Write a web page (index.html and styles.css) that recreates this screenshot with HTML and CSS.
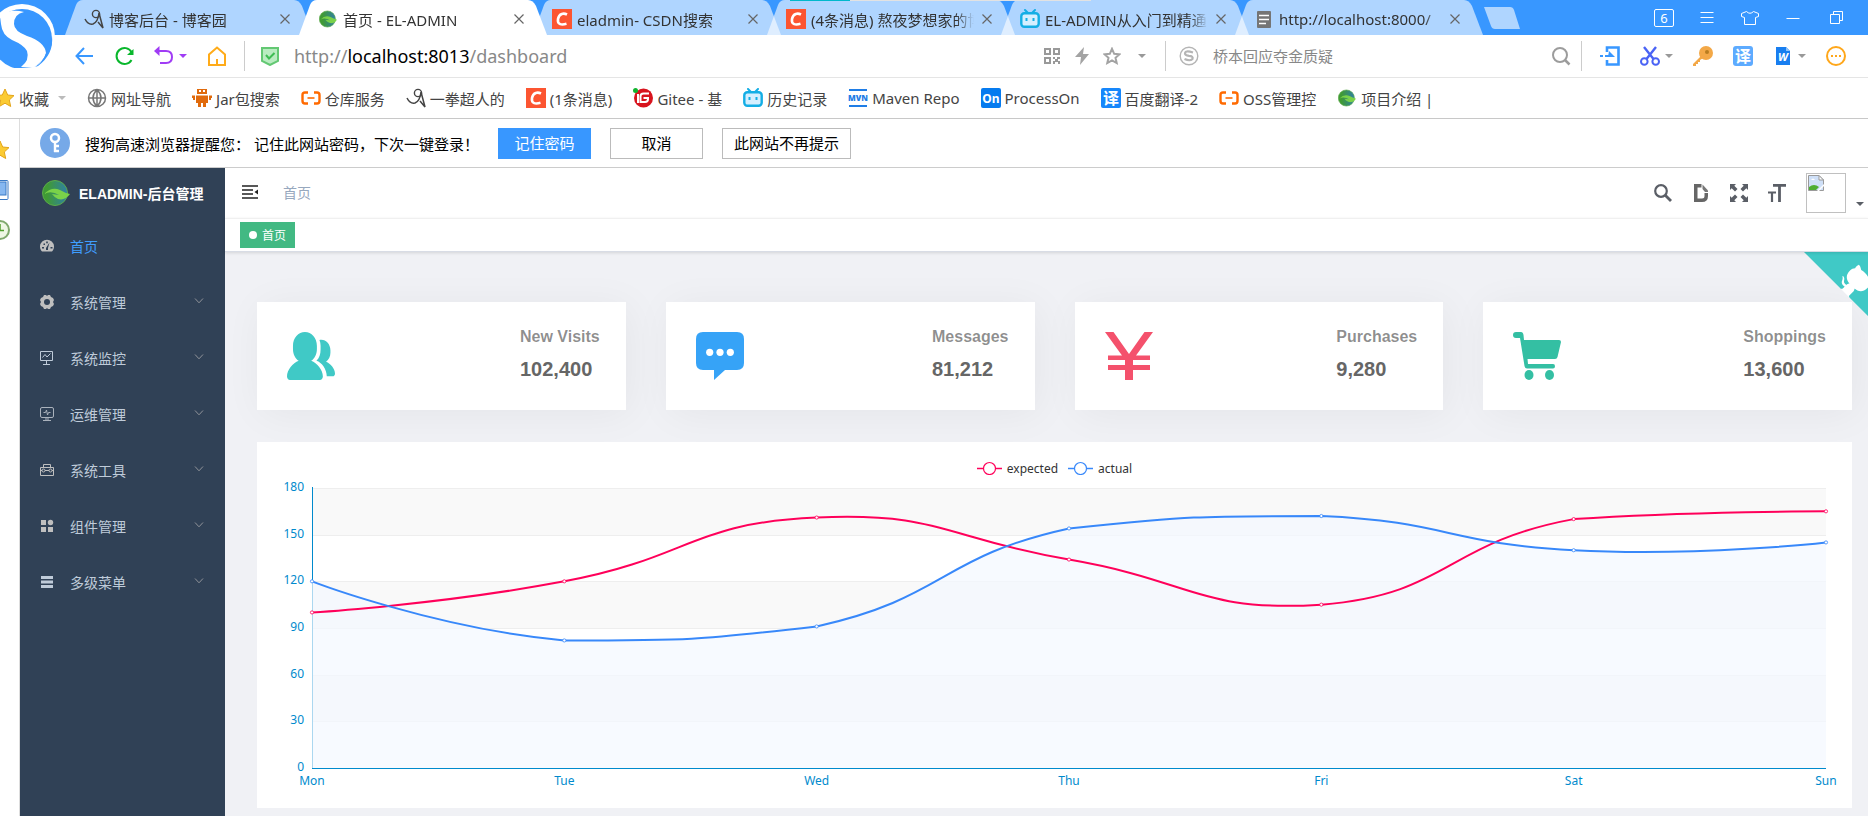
FILE: index.html
```html
<!DOCTYPE html>
<html lang="zh-CN">
<head>
  <meta charset="UTF-8">
  <meta name="viewport" content="width=device-width, initial-scale=1.0">
  <title>首页 - EL-ADMIN</title>
  <link rel="stylesheet" href="styles.css">
</head>
<body>
  <!-- shared icons -->
  <svg class="sprite" aria-hidden="true">
    <defs>
      <linearGradient id="leaf-bg" x1="0" y1="0" x2="1" y2="0">
        <stop offset="0.2" stop-color="#3f9a35"/>
        <stop offset="1" stop-color="#2f7fa6"/>
      </linearGradient>
    </defs>
    <symbol id="i-tab" viewBox="0 0 248 35" preserveAspectRatio="none">
      <path d="M0 35 L11 5 Q13 0 18 0 H229 Q234 0 237 6 L248 35 Z"/>
    </symbol>
    <symbol id="i-close" viewBox="0 0 10 10">
      <path d="M0.500 0.500 L9.500 9.500 M9.500 0.500 L0.500 9.500" fill="none" stroke="#666" stroke-width="1.200"/>
    </symbol>
    <symbol id="i-caret" viewBox="0 0 8 4"><path d="M0 0 H8 L4 4 Z"/></symbol>
    <symbol id="i-chevron" viewBox="0 0 10 6">
      <path d="M1 0.500 L5 4.800 L9 0.500" fill="none" stroke="#909399" stroke-width="1"/>
    </symbol>
    <symbol id="i-cnblogs" viewBox="0 0 20 20">
      <circle cx="12" cy="5" r="3.600" fill="none" stroke="#444" stroke-width="1.400"/>
      <path d="M1 10 Q4 16 9 15 Q14 13 15 4 L19 19 L14 13" fill="none" stroke="#444" stroke-width="1.500"/>
    </symbol>
    <symbol id="i-leaf" viewBox="0 0 28 26">
      <circle cx="13" cy="13" r="12.500" fill="url(#leaf-bg)" stroke="#5cab4a" stroke-width="1"/>
      <path d="M2 14 Q10 6 18 10 Q23 13 28 14 Q23 21 16 19 Q12 17 10 14 L17 15 Q9 10 2 14 Z" fill="#7ad249"/>
    </symbol>
    <symbol id="i-csdn" viewBox="0 0 20 20">
      <rect width="20" height="20" fill="#fc5531"/>
      <path d="M15 5.500 C12 4 7 4 6 10 C5 16 10 16 14.500 14.800" fill="none" stroke="#fff" stroke-width="2.600"/>
    </symbol>
    <symbol id="i-bili" viewBox="0 0 20 20">
      <path d="M5 1 L8 4 M15 1 L12 4" stroke="#14aee5" stroke-width="2" stroke-linecap="round"/>
      <rect x="1.300" y="4.300" width="17.400" height="13.400" rx="3" fill="#d5efff" stroke="#14aee5" stroke-width="2.400"/>
      <path d="M6.500 9 V12 M13.500 9 V12" stroke="#14aee5" stroke-width="2"/>
    </symbol>
    <symbol id="i-aliyun" viewBox="0 0 20 14">
      <path d="M7 1.500 H4 Q1.500 1.500 1.500 4 V10 Q1.500 12.500 4 12.500 H7 M13 1.500 H16 Q18.500 1.500 18.500 4 V10 Q18.500 12.500 16 12.500 H13" fill="none" stroke="#ff6a00" stroke-width="2.400"/>
      <path d="M6.500 7 H13.500" stroke="#ff6a00" stroke-width="1.600"/>
    </symbol>
    <symbol id="i-star" viewBox="0 0 20 20">
      <path d="M10 1 L12.700 7 L19 7.600 L14.300 12 L15.700 18.500 L10 15.200 L4.300 18.500 L5.700 12 L1 7.600 L7.300 7 Z" fill="#fbcb33" stroke="#e3a51b" stroke-width="1"/>
    </symbol>
  </svg>

  <header class="browser">
    <svg class="brand" viewBox="0 0 56 68" aria-hidden="true">
      <circle cx="22" cy="37" r="33" fill="#fff"/>
      <circle cx="22" cy="39" r="30" fill="#3897ff"/>
      <path d="M0 16 Q10 8 24 12 Q14 14 14 24 Q14 31 27 36 Q45 42 46 53 Q44 61 33 68 L21 67 Q30 60 27 51 Q24 45 12 40 Q2 35 1 24 Z" fill="#fff"/>
      <path d="M35 67 Q47 60 47 46 Q52 40 52 36 Q54 54 38 66 Z" fill="#3897ff"/>
    </svg>
    <div class="tab-strip">
      <nav class="tabs">
        <div class="tab">
          <svg class="tab-shape"><use href="#i-tab"/></svg>
          <svg class="icon"><use href="#i-cnblogs"/></svg>
          <a class="tab-title" href="#">博客后台 - 博客园</a>
          <button class="tab-close" aria-label="关闭"><svg><use href="#i-close"/></svg></button>
        </div>
        <div class="tab active">
          <svg class="tab-shape"><use href="#i-tab"/></svg>
          <svg class="icon leaf-small"><use href="#i-leaf"/></svg>
          <a class="tab-title" href="#">首页 - EL-ADMIN</a>
          <button class="tab-close" aria-label="关闭"><svg><use href="#i-close"/></svg></button>
        </div>
        <div class="tab">
          <svg class="tab-shape"><use href="#i-tab"/></svg>
          <svg class="icon"><use href="#i-csdn"/></svg>
          <a class="tab-title" href="#">eladmin- CSDN搜索</a>
          <button class="tab-close" aria-label="关闭"><svg><use href="#i-close"/></svg></button>
        </div>
        <div class="tab loading">
          <svg class="tab-shape"><use href="#i-tab"/></svg>
          <svg class="icon"><use href="#i-csdn"/></svg>
          <a class="tab-title" href="#">(4条消息) 熬夜梦想家的博</a>
          <button class="tab-close" aria-label="关闭"><svg><use href="#i-close"/></svg></button>
        </div>
        <div class="tab">
          <svg class="tab-shape"><use href="#i-tab"/></svg>
          <svg class="icon"><use href="#i-bili"/></svg>
          <a class="tab-title" href="#">EL-ADMIN从入门到精通</a>
          <button class="tab-close" aria-label="关闭"><svg><use href="#i-close"/></svg></button>
        </div>
        <div class="tab">
          <svg class="tab-shape"><use href="#i-tab"/></svg>
          <svg class="icon" viewBox="0 0 20 20"><rect x="3" y="2" width="14" height="17" rx="1" fill="#757575"/><path d="M5 6.500 H15 M5 10.500 H15 M5 14.500 H12" stroke="#fff" stroke-width="1.500"/></svg>
          <a class="tab-title" href="#">http://localhost:8000/</a>
          <button class="tab-close" aria-label="关闭"><svg><use href="#i-close"/></svg></button>
        </div>
      </nav>
      <button class="new-tab" aria-label="新标签">
        <svg viewBox="0 0 36 22"><path d="M0 0 H26 Q29 0 30 3 L36 22 H11 Q8 22 7 19 Z" fill="#afd5ff"/></svg>
      </button>
      <div class="window-controls">
        <button class="tab-count">6</button>
        <button aria-label="菜单"><svg viewBox="0 0 20 20"><path d="M3.500 4.500 H16.500 M3.500 9.500 H16.500 M3.500 14.500 H16.500" stroke="#fff"/></svg></button>
        <button aria-label="皮肤"><svg viewBox="0 0 20 20"><path d="M6.500 3.500 L1.500 5.500 V8.500 L4.500 9.500 V16.500 H15.500 V9.500 L18.500 8.500 V5.500 L13.500 3.500 Q10 7 6.500 3.500 Z" fill="none" stroke="#fff"/></svg></button>
        <button aria-label="最小化"><svg viewBox="0 0 20 20"><path d="M3.500 10.500 H16.500" stroke="#fff"/></svg></button>
        <button aria-label="还原"><svg viewBox="0 0 20 20"><path d="M4.500 6.500 H13.500 V15.500 H4.500 Z M7.500 6 V3.500 H16.500 V12.500 H14" fill="none" stroke="#fff"/></svg></button>
      </div>
    </div>

    <div class="toolbar">
      <div class="nav-buttons">
        <button aria-label="后退"><svg viewBox="0 0 20 20"><path d="M19 10 H3 M10 2 L2.500 10 L10 18" fill="none" stroke="#3897ff" stroke-width="2"/></svg></button>
        <button aria-label="刷新"><svg viewBox="0 0 20 20"><path d="M17.500 6 A8 8 0 1 0 17.500 14" fill="none" stroke="#09b72c" stroke-width="2"/><path d="M19.500 3 V9 H13 Z" fill="#09b72c"/></svg></button>
        <button class="with-caret purple" aria-label="恢复"><svg viewBox="0 0 20 20"><path d="M3 5 H12 Q18 5 18 11 Q18 17 12 17 H6" fill="none" stroke="#a03cf5" stroke-width="2"/><path d="M0 5 L5.500 0 V10 Z" fill="#a03cf5"/></svg><svg class="caret"><use href="#i-caret"/></svg></button>
        <button aria-label="主页"><svg viewBox="0 0 20 20"><path d="M2 19 V8.500 L10 1.500 L18 8.500 V19 Z M10 19 V13" fill="none" stroke="#ffab19" stroke-width="2"/></svg></button>
      </div>
      <div class="address">
        <svg class="icon" viewBox="0 0 20 20"><path d="M2 2 H18 V15 L10 19 L2 15 Z" fill="#b9ecc1" stroke="#63c873" stroke-width="2"/><path d="M6 9 L9 12.500 L14.500 7" fill="none" stroke="#3ebd53" stroke-width="2"/></svg>
        <div class="url" role="textbox" aria-label="地址">http://<b>localhost:8013</b>/dashboard</div>
        <div class="address-tools">
          <button aria-label="二维码"><svg viewBox="0 0 18 18"><path d="M2 2 H7 V7 H2 Z M11 2 H16 V7 H11 Z M2 11 H7 V16 H2 Z" fill="none" stroke="#999" stroke-width="2"/><path d="M10 10 H12 V12 H14 V10 H17 V12 H15 V14 H17 V17 H15 V15 H12 V17 H10 V14 H12 V12 H10 Z" fill="#999"/></svg></button>
          <button aria-label="极速"><svg viewBox="0 0 18 18"><path d="M11 0 L2 10 H8 L7 18 L16 7 H10 Z" fill="#a3a3a3"/></svg></button>
          <button aria-label="收藏"><svg viewBox="0 0 18 18"><path d="M9 1.800 L11.200 6.800 L16.500 7.300 L12.500 10.800 L13.700 16 L9 13.300 L4.300 16 L5.500 10.800 L1.500 7.300 L6.800 6.800 Z" fill="none" stroke="#a3a3a3" stroke-width="2"/></svg></button>
          <button class="gray" aria-label="更多"><svg class="caret"><use href="#i-caret"/></svg></button>
        </div>
      </div>
      <form class="search">
        <svg class="icon" viewBox="0 0 20 20"><circle cx="10" cy="10" r="8.800" fill="none" stroke="#b5b5b5" stroke-width="1.400"/><path d="M14 6.500 Q6 4 6 7.500 Q6 9.500 10 9.800 Q14.500 10 13.500 13 Q11 15.500 5.500 13" fill="none" stroke="#b5b5b5" stroke-width="2.200"/></svg>
        <input type="text" placeholder="桥本回应夺金质疑" aria-label="搜索">
        <button type="button" aria-label="搜索"><svg viewBox="0 0 20 20"><circle cx="9" cy="9" r="7" fill="none" stroke="#9c9c9c" stroke-width="2"/><path d="M14 14 L18.500 18.500" stroke="#9c9c9c" stroke-width="2.500"/></svg></button>
      </form>
      <div class="extensions">
        <button aria-label="发送到手机"><svg viewBox="0 0 20 20"><path d="M7 6 V1.500 H18.500 V18.500 H7 V14" fill="none" stroke="#3897ff" stroke-width="2.600"/><path d="M0 10 H3 M5 10 H9" stroke="#3897ff" stroke-width="2"/><path d="M9 5 L15 11 H8 Z" fill="#3897ff"/></svg></button>
        <button class="with-caret gray" aria-label="截图"><svg viewBox="0 0 20 20"><path d="M4 1 L13.500 13 M16 1 L6.500 13" stroke="#4a63f5" stroke-width="2.400"/><circle cx="4.300" cy="15.500" r="3.300" fill="none" stroke="#4a63f5" stroke-width="2"/><circle cx="15.700" cy="15.500" r="3.300" fill="none" stroke="#4a63f5" stroke-width="2"/></svg><svg class="caret"><use href="#i-caret"/></svg></button>
        <button aria-label="密码"><svg viewBox="0 0 20 20"><circle cx="13" cy="7" r="7" fill="#f3a847"/><path d="M9 9 L0 18 V20 H3 V18 H5 V16 H7 V14 L12 11 Z" fill="#f3a847"/><circle cx="14" cy="6" r="2" fill="#b97c1f"/></svg></button>
        <button aria-label="翻译"><svg viewBox="0 0 20 20"><rect width="20" height="20" rx="3" fill="#5dabff"/><text class="glyph" x="10" y="16" font-size="16">译</text></svg></button>
        <button class="with-caret gray" aria-label="文档"><svg viewBox="0 0 20 20"><path d="M3 1 H13 L17 5 V19 H3 Z" fill="#187ef0"/><path d="M13 1 L17 5 H13 Z" fill="#8ec2fa"/><text class="glyph" x="10" y="15" font-size="11" font-style="italic">W</text></svg><svg class="caret"><use href="#i-caret"/></svg></button>
        <button aria-label="更多扩展"><svg viewBox="0 0 20 20"><circle cx="10" cy="10" r="9" fill="none" stroke="#ffa71a" stroke-width="2"/><path d="M5 9 h2 v2 h-2z M9 9 h2 v2 h-2z M13 9 h2 v2 h-2z" fill="#ffa71a"/></svg></button>
      </div>
    </div>

    <nav class="bookmarks">
      <button class="favorites"><svg class="icon"><use href="#i-star"/></svg>收藏<svg class="caret"><use href="#i-caret"/></svg></button>
      <a href="#"><svg class="icon" viewBox="0 0 20 20"><path d="M10 1.500 A8.500 8.500 0 0 1 10 18.500 A8.500 8.500 0 0 1 10 1.500 Z M10 1.500 Q2 10 10 18.500 M10 1.500 Q18 10 10 18.500 M10 1.500 V18.500 M1.500 10 H18.500" fill="none" stroke="#777" stroke-width="1.500"/></svg>网址导航</a>
      <a href="#"><svg class="icon" viewBox="0 0 20 20"><path d="M5 1 H15 V6 H5 Z M4 7.500 H16 V15 H14 V19 H11 V15 H9 V19 H6 V15 H4 Z M0 7.500 H3 V12 H1 V10 H0 Z M17 7.500 H20 V10 H19 V12 H17 Z" fill="#e06a0c"/><path d="M7 2 h2 v2 h-2z M11 2 h2 v2 h-2z" fill="#fff"/></svg>Jar包搜索</a>
      <a href="#"><svg class="icon"><use href="#i-aliyun"/></svg>仓库服务</a>
      <a href="#"><svg class="icon"><use href="#i-cnblogs"/></svg>一拳超人的</a>
      <a href="#"><svg class="icon"><use href="#i-csdn"/></svg>(1条消息)</a>
      <a href="#"><svg class="icon" viewBox="0 0 20 20"><circle cx="10.500" cy="10" r="9.500" fill="#d8141e"/><circle cx="2.500" cy="2.500" r="2.500" fill="#10b32e"/><path d="M16 5.500 H10.500 Q7.500 5.500 7.500 8 V14 H12 Q15 14 15 11 V10 H10.500 M5 6 V15" fill="none" stroke="#fff" stroke-width="2"/></svg>Gitee - 基</a>
      <a href="#"><svg class="icon"><use href="#i-bili"/></svg>历史记录</a>
      <a href="#"><svg class="icon" viewBox="0 0 20 20"><path d="M1 2 H19 M1 18 H19" stroke="#1f7de6" stroke-width="2"/><text x="10" y="13" font-size="8" font-weight="900" fill="#1f7de6" text-anchor="middle">MVN</text></svg>Maven Repo</a>
      <a href="#"><svg class="icon" viewBox="0 0 20 20"><rect width="20" height="20" rx="2" fill="#067bef"/><text class="glyph" x="10" y="15" font-size="12">On</text></svg>ProcessOn</a>
      <a href="#"><svg class="icon" viewBox="0 0 20 20"><rect width="20" height="20" rx="2" fill="#1787fb"/><text class="glyph" x="10" y="16" font-size="16">译</text></svg>百度翻译-2</a>
      <a href="#"><svg class="icon"><use href="#i-aliyun"/></svg>OSS管理控</a>
      <a href="#"><svg class="icon leaf-small"><use href="#i-leaf"/></svg>项目介绍 |</a>
    </nav>
  </header>

  <div class="page">
    <aside class="dock">
      <svg viewBox="0 0 20 20"><use href="#i-star"/></svg>
      <svg viewBox="0 0 20 20"><rect x="1" y="0.500" width="17" height="19" rx="1" fill="#fff" stroke="#3878c4"/><rect x="2" y="2" width="14" height="13" fill="#86b7f0" stroke="#3878c4"/></svg>
      <svg viewBox="0 0 20 20"><circle cx="10" cy="10" r="9" fill="#eef7e4" stroke="#7fa96c" stroke-width="2"/><path d="M10 4 V10.500 H14" fill="none" stroke="#50a02c" stroke-width="1.500"/></svg>
    </aside>

    <div class="viewport">
      <div class="remember">
        <svg class="key" viewBox="0 0 30 30"><circle cx="15" cy="15" r="15" fill="#76a9e8"/><circle cx="15" cy="10" r="4" fill="none" stroke="#fff" stroke-width="2.500"/><path d="M15 14 V24 M15 18 H19 M14 23 H19" stroke="#fff" stroke-width="2.400"/></svg>
        <p>搜狗高速浏览器提醒您： 记住此网站密码，下次一键登录！</p>
        <button class="primary">记住密码</button>
        <button>取消</button>
        <button class="never">此网站不再提示</button>
      </div>

      <div class="app">
        <aside class="sidebar">
          <a class="logo" href="#"><svg><use href="#i-leaf"/></svg>ELADMIN-后台管理</a>
          <nav class="menu">
            <a class="current" href="#">
              <svg class="icon" viewBox="0 0 14 14"><path d="M1.500 12 A7 7 0 1 1 12.500 12 Q12 12.500 11 12.500 H3 Q2 12.500 1.500 12 Z" fill="#bfbfbf"/><path d="M2 8 h2 v1.500 h-2z M3.500 4.500 h1.500 v1.500 h-1.500z M6.200 2.500 h1.600 v1.700 h-1.600z M10.500 8 h2 v1.500 h-2z M9.500 3.500 L8 9 V11 H6 V9 Z" fill="#304156"/></svg>
              <span>首页</span>
            </a>
            <a href="#">
              <svg class="icon" viewBox="0 0 14 14"><path d="M4 0 H6 L7 1 L8 0 H10 L11 2 L13 3 L14 5 L13 7 L14 9 L13 11 L11 12 L10 14 H8 L7 13 L6 14 H4 L3 12 L1 11 L0 9 L1 7 L0 5 L1 3 L3 2 Z" fill="#bfbfbf"/><circle cx="7" cy="7" r="3" fill="#304156"/></svg>
              <span>系统管理</span><svg class="chevron"><use href="#i-chevron"/></svg>
            </a>
            <a href="#">
              <svg class="icon" viewBox="0 0 14 14"><path d="M0.500 0.500 H12.500 V9.500 H0.500 Z M6.500 9.500 V13 M3 13.500 H10 M2.500 6.500 L5 3.500 L7 6 L10.500 2.500" fill="none" stroke="#bfcbd9"/></svg>
              <span>系统监控</span><svg class="chevron"><use href="#i-chevron"/></svg>
            </a>
            <a href="#">
              <svg class="icon" viewBox="0 0 14 14"><rect x="0.500" y="0.500" width="13" height="10" rx="1.500" fill="none" stroke="#aab2bc"/><path d="M3.500 5.500 H5.500 L6.500 3 L7.500 8 L8.500 5.500 H10.500 M3 13.500 H11 M5 12 H9" fill="none" stroke="#aab2bc"/></svg>
              <span>运维管理</span><svg class="chevron"><use href="#i-chevron"/></svg>
            </a>
            <a href="#">
              <svg class="icon" viewBox="0 0 14 14"><path d="M0.500 4.500 H13.500 V12.500 H0.500 Z M3.500 4 V1.500 H10.500 V4 M1 7.500 H13" fill="none" stroke="#bfbfbf"/><circle cx="3.500" cy="7.500" r="1.500" fill="#304156" stroke="#bfbfbf"/><circle cx="10.500" cy="7.500" r="1.500" fill="#304156" stroke="#bfbfbf"/></svg>
              <span>系统工具</span><svg class="chevron"><use href="#i-chevron"/></svg>
            </a>
            <a href="#">
              <svg class="icon" viewBox="0 0 14 14"><path d="M1 1 H6 V6 H1 Z M1 8 H6 V13 H1 Z M8 8 H13 V13 H8 Z" fill="#bfbfbf"/><circle cx="10.500" cy="3.500" r="2.700" fill="#bfbfbf"/></svg>
              <span>组件管理</span><svg class="chevron"><use href="#i-chevron"/></svg>
            </a>
            <a href="#">
              <svg class="icon" viewBox="0 0 14 14"><path d="M1 1 H13 V4 H1 Z M1 5.500 H13 V8.500 H1 Z M1 10 H13 V13 H1 Z" fill="#bfcbd9"/></svg>
              <span>多级菜单</span><svg class="chevron"><use href="#i-chevron"/></svg>
            </a>
          </nav>
        </aside>

        <main class="main">
          <div class="navbar">
            <button aria-label="收起菜单"><svg class="hamburger" viewBox="0 0 16 14"><path d="M0 1 H16 M0 5 H11 M0 9 H11 M0 13 H16" stroke="#222" stroke-width="1.500"/><path d="M12.500 7 L16 4.500 V9.500 Z" fill="#222"/></svg></button>
            <a class="breadcrumb" href="#">首页</a>
            <div class="navbar-right">
              <button aria-label="搜索"><svg viewBox="0 0 18 18"><circle cx="7" cy="7" r="5.800" fill="none" stroke="#5a5e66" stroke-width="2.200"/><path d="M11 11 L17 17" stroke="#5a5e66" stroke-width="2.800"/></svg></button>
              <button aria-label="文档"><svg viewBox="0 0 18 18"><path d="M2 0 H9.500 V3.500 H5.500 V14.500 H10 Q12.500 14.500 12.500 12 V9 H16 V12 Q16 18 10 18 H2 Z" fill="#666"/><path d="M10.500 0.500 L16 6.500 V8 H13 L10.500 5 Z" fill="#777"/></svg></button>
              <button aria-label="全屏"><svg viewBox="0 0 18 18"><path d="M0 0 H6 L4.300 1.700 L7.500 5 L5 7.500 L1.700 4.300 L0 6 Z M18 0 H12 L13.700 1.700 L10.500 5 L13 7.500 L16.300 4.300 L18 6 Z M0 18 H6 L4.300 16.300 L7.500 13 L5 10.500 L1.700 13.700 L0 12 Z M18 18 H12 L13.700 16.300 L10.500 13 L13 10.500 L16.300 13.700 L18 12 Z" fill="#5a5e66"/></svg></button>
              <button aria-label="布局大小"><svg viewBox="0 0 18 18"><path d="M5 1.300 H18 M11.500 1 V18" stroke="#5a5e66" stroke-width="2.800"/><path d="M0 8.500 H8 M4 8 V18" stroke="#5a5e66" stroke-width="2.200"/></svg></button>
              <button class="avatar" aria-label="用户">
                <span class="avatar-box"><svg viewBox="0 0 16 16"><path d="M0.500 0.500 H11 L15.500 5 V15.500 H0.500 Z" fill="#cfe0f8" stroke="#9a9a9a"/><path d="M3 5 Q5 2 7 5 Z" fill="#fff"/><path d="M1 15 V12 Q6 8 11 12 L8 15 Z" fill="#4fae33"/><path d="M11 0.500 V5 H15.500 Z" fill="#fff" stroke="#9a9a9a"/><path d="M16 9 L9 16 H11 L16 11 Z" fill="#fff"/></svg></span>
                <svg class="caret"><use href="#i-caret"/></svg>
              </button>
            </div>
          </div>
          <div class="tags"><a class="tag" href="#">首页</a></div>

          <div class="dashboard">
            <a class="corner" href="#" aria-label="Github">
              <svg viewBox="0 0 250 250"><path d="M0 0 L115 115 L130 115 L142 142 L250 250 V0 Z" fill="#40c9c6"/><path d="M128.300 109 C113.800 99.700 119 89.600 119 89.600 C122 82.700 120.500 78.600 120.500 78.600 C119.200 72 123.400 76.300 123.400 76.300 C127.300 80.900 125.500 87.300 125.500 87.300 C122.900 97.600 130.600 101.900 134.400 103.200" fill="#fff"/><path d="M115 115 C114.900 115.100 118.700 116.500 119.800 115.400 L133.700 101.600 C136.900 99.200 139.900 98.400 142.200 98.600 C133.800 88 127.500 74.400 143.800 58 C148.500 53.400 154 51.200 159.700 51 C160.300 49.400 163.200 43.600 171.400 40.100 C171.400 40.100 176.100 42.500 178.800 56.200 C183.100 58.600 187.200 61.800 190.900 65.400 C194.500 69 197.700 73.200 200.100 77.600 C213.800 80.200 216.300 84.900 216.300 84.900 C212.700 93.100 206.900 96 205.400 96.600 C205.100 102.400 203 107.800 198.300 112.500 C181.900 128.900 168.300 122.500 157.700 114.100 C157.900 116.900 156.700 120.900 152.700 124.900 L141 136.500 C139.800 137.700 141.600 141.900 141.800 141.800 Z" fill="#fff"/></svg>
            </a>
            <section class="panels">
              <div class="panel">
                <svg viewBox="0 0 128 128" fill="#40c9c6"><path d="M95.648 118.762c0 5.035-3.563 9.121-7.979 9.121H7.980c-4.416 0-7.979-4.086-7.979-9.121C0 100.519 15.408 83.470 31.152 76.750c-9.099-6.430-15.216-17.863-15.216-30.987v-9.128c0-20.160 14.293-36.518 31.893-36.518s31.894 16.358 31.894 36.518v9.122c0 13.137-6.123 24.556-15.216 30.993 15.738 6.726 31.141 23.769 31.141 42.012z"/><path d="M106.032 118.252h15.867c3.376 0 6.101-3.125 6.101-6.972 0-13.957-11.787-26.984-23.819-32.123 6.955-4.919 11.638-13.660 11.638-23.704v-6.985c0-15.416-10.928-27.926-24.390-27.926-1.674 0-3.306.193-4.890.561 1.936 4.713 3.018 9.974 3.018 15.526v9.121c0 13.137-3.056 23.111-11.066 30.993 14.842 4.410 27.312 23.420 27.541 41.509z"/></svg>
                <div class="description"><div class="label">New Visits</div><div class="number">102,400</div></div>
              </div>
              <div class="panel">
                <svg viewBox="0 0 48 48"><path d="M7 0 H41 Q48 0 48 7 V31 Q48 38 41 38 H29 L18 48 V38 H7 Q0 38 0 31 V7 Q0 0 7 0 Z" fill="#36a3f7"/><g fill="#fff"><circle cx="13.700" cy="20.300" r="3.600"/><circle cx="24" cy="20.300" r="3.600"/><circle cx="34.300" cy="20.300" r="3.600"/></g></svg>
                <div class="description"><div class="label">Messages</div><div class="number">81,212</div></div>
              </div>
              <div class="panel">
                <svg viewBox="0 0 48 48"><path d="M0 0 H8.500 L24 22 L39.500 0 H48 L31 23.500 H45 V28 H28 V33 H45 V38 H28 V48 H20 V38 H3 V33 H20 V28 H3 V23.500 H17 Z" fill="#f4516c"/></svg>
                <div class="description"><div class="label">Purchases</div><div class="number">9,280</div></div>
              </div>
              <div class="panel">
                <svg viewBox="0 0 48 48" fill="#34bfa3"><path d="M3 0 H8 Q10 0 10.500 3 L11 8 H46 Q48 8 48 10 L44.500 25 Q44 27 42 27 H14.500 L15 32 H40 Q42 32 42 34.200 Q42 36.500 40 36.500 H14 Q12 36.500 11.500 34 L7 6 H3 Q0 6 0 3 Q0 0 3 0 Z"/><ellipse cx="16" cy="43" rx="4.500" ry="5"/><ellipse cx="36.500" cy="43" rx="4.500" ry="5"/></svg>
                <div class="description"><div class="label">Shoppings</div><div class="number">13,600</div></div>
              </div>
            </section>
            <section class="chart-card">
              <div class="legend">
                <span><svg viewBox="0 0 25 14"><path d="M0 7.500 H25" stroke="#ff005a" stroke-width="1.500"/><circle cx="12.500" cy="7.500" r="6" fill="#fff" stroke="#ff005a" stroke-width="1.200"/></svg>expected</span>
                <span><svg viewBox="0 0 25 14"><path d="M0 7.500 H25" stroke="#3888fa" stroke-width="1.500"/><circle cx="12.500" cy="7.500" r="6" fill="#fff" stroke="#3888fa" stroke-width="1.200"/></svg>actual</span>
              </div>
              <svg class="chart" id="chart"></svg>
            </section>
          </div>
        </main>
      </div>
    </div>
  </div>
  <script src="chart.js"></script>
</body>
</html>
```

FILE: styles.css
```css
* {
  margin: 0;
  padding: 0;
  box-sizing: border-box;
}

body {
  display: flex;
  flex-direction: column;
  height: 100vh;
  overflow: hidden;
  background-color: #fff;
  font-family: "Noto Sans", "Noto Sans CJK SC", sans-serif;
  font-size: 15px;
}

a {
  color: inherit;
  text-decoration: none;
}

button {
  display: flex;
  align-items: center;
  border: none;
  background: none;
  font: inherit;
  color: inherit;
  cursor: pointer;
}

svg {
  display: block;
  flex: none;
}

.sprite {
  position: absolute;
  width: 0;
  height: 0;
}

.icon {
  width: 20px;
  height: 20px;
}

.leaf-small {
  padding: 0 1px;
}

.caret {
  width: 8px;
  height: 4px;
}

.glyph {
  fill: #fff;
  font-weight: 700;
  text-anchor: middle;
}

/* browser chrome */
.browser {
  position: relative;
}

.brand {
  position: absolute;
  left: 0;
  top: 0;
  z-index: 3;
  width: 56px;
  height: 68px;
}

.tab-strip {
  display: flex;
  height: 35px;
  padding-left: 65px;
  background-color: #3897ff;
}

.tabs {
  display: flex;
  flex: 0 1 1418px;
  min-width: 0;
}

.tab {
  position: relative;
  display: flex;
  flex: 1;
  align-items: center;
  gap: 5px;
  min-width: 0;
  padding: 3px 23px 0 19px;
  color: #333;
}

.tab + .tab {
  margin-left: -14px;
}

.tab.active {
  z-index: 1;
}

.tab-shape {
  position: absolute;
  left: 0;
  top: 0;
  width: 100%;
  height: 35px;
  fill: rgba(255, 255, 255, 0.6);
}

.active .tab-shape {
  fill: #fff;
}

.tab .icon,
.tab-title,
.tab-close {
  position: relative;
}

.tab-title {
  flex: 1;
  margin-right: 3px;
  overflow: hidden;
  white-space: nowrap;
  mask-image: linear-gradient(to left, transparent, #000 18px);
}

.tab-close svg {
  width: 10px;
  height: 10px;
}

.loading::after {
  content: "";
  position: absolute;
  left: 23px;
  top: 0;
  width: 301px;
  height: 1px;
  z-index: 2;
  background: linear-gradient(to right, #00b8cc 60px, #e2e2e2 60px);
}

.new-tab {
  margin: 0 auto 0 1px;
}

.new-tab svg {
  width: 36px;
  height: 22px;
}

.window-controls {
  display: flex;
  gap: 23px;
  padding-right: 22px;
  color: #fff;
}

.window-controls svg {
  width: 20px;
  height: 20px;
}

.tab-count {
  justify-content: center;
  align-self: center;
  width: 20px;
  height: 18px;
  border: 1px solid #fff;
  border-radius: 2px;
  font-size: 13px;
}

.toolbar {
  display: flex;
  align-items: center;
  height: 43px;
  padding-left: 74px;
  border-bottom: 1px solid #e5e5e5;
}

.toolbar button svg {
  width: 20px;
  height: 20px;
}

.toolbar button .caret {
  width: 8px;
  height: 4px;
}

.nav-buttons,
.extensions {
  display: flex;
  align-items: center;
  gap: 20px;
}

.with-caret {
  gap: 5px;
}

.purple {
  fill: #a03cf5;
}

.gray {
  fill: #999;
}

.address {
  display: flex;
  flex: 1;
  align-items: center;
  gap: 14px;
  min-width: 0;
  height: 30px;
  margin-left: 17px;
  padding: 0 14px 0 15px;
  border-left: 1px solid #ccc;
}

.url {
  flex: 1;
  min-width: 0;
  overflow: hidden;
  color: #888;
  font-size: 18px;
}

.url b {
  color: #000;
  font-weight: 400;
}

.address-tools {
  display: flex;
  align-items: center;
  gap: 12px;
}

.address-tools button {
  justify-content: center;
  width: 18px;
}

.toolbar .address-tools svg:not(.caret) {
  width: 18px;
  height: 18px;
}

.search {
  display: flex;
  flex: 0 1 417px;
  align-items: center;
  gap: 14px;
  height: 30px;
  padding: 0 10px 0 13px;
  border: solid #ccc;
  border-width: 0 1px;
}

.search input {
  flex: 1;
  min-width: 0;
  border: none;
  outline: none;
  font: inherit;
}

.search input::placeholder {
  color: #888;
}

.extensions {
  padding: 0 22px 0 18px;
}

.bookmarks {
  display: flex;
  align-items: center;
  gap: 21px;
  height: 41px;
  border-bottom: 1px solid #c8c8c8;
  color: #444;
  white-space: nowrap;
}

.bookmarks a,
.favorites {
  display: flex;
  align-items: center;
  gap: 4px;
}

.favorites {
  margin-left: -5px;
  fill: #bbb;
}

.favorites .caret {
  margin-left: 5px;
}

/* page area */
.page {
  display: flex;
  flex: 1;
  min-height: 0;
}

.dock {
  display: flex;
  flex-direction: column;
  align-items: flex-start;
  gap: 20px;
  width: 20px;
  padding-top: 21px;
  overflow: hidden;
  border-right: 1px solid #ddd;
}

.dock svg {
  width: 20px;
  height: 20px;
  margin-left: -10px;
}

.viewport {
  display: flex;
  flex: 1;
  flex-direction: column;
  min-width: 0;
}

.remember {
  display: flex;
  align-items: center;
  height: 49px;
  padding-left: 20px;
  border-bottom: 1px solid #ccc;
  color: #000;
}

.key {
  width: 30px;
  height: 30px;
  margin-right: 15px;
}

.remember p {
  width: 394px;
}

.remember button {
  justify-content: center;
  width: 93px;
  height: 31px;
  margin-left: 19px;
  padding-bottom: 2px;
  border: 1px solid #bbb;
}

.remember .primary {
  border-color: #3897ff;
  background-color: #3897ff;
  color: #fff;
}

.remember .never {
  width: 129px;
}

.app {
  display: flex;
  flex: 1;
  min-height: 0;
  font-size: 14px;
}

.sidebar {
  width: 205px;
  background-color: #304156;
  color: #bfcbd9;
}

.logo {
  display: flex;
  align-items: center;
  gap: 9px;
  height: 50px;
  padding-left: 22px;
  color: #fff;
  font-family: "Liberation Sans", "Noto Sans CJK SC", sans-serif;
  font-weight: 700;
}

.logo svg {
  width: 28px;
  height: 26px;
}

.menu a {
  display: flex;
  align-items: center;
  gap: 16px;
  height: 56px;
  padding: 0 21px 0 20px;
}

.menu .icon {
  width: 14px;
  height: 14px;
}

.menu span {
  flex: 1;
}

.menu .current {
  color: #409eff;
}

.chevron {
  width: 10px;
  height: 6px;
  margin-bottom: 2px;
}

.main {
  display: flex;
  flex: 1;
  flex-direction: column;
  min-width: 0;
}

.navbar {
  display: flex;
  align-items: center;
  gap: 25px;
  height: 50px;
  padding-left: 17px;
  color: #97a8be;
}

.breadcrumb,
.hamburger {
  margin-bottom: 2px;
}

.hamburger {
  width: 16px;
  height: 14px;
}

.navbar-right {
  display: flex;
  align-items: center;
  gap: 20px;
  margin-left: auto;
  padding-right: 4px;
}

.navbar-right button > svg:not(.caret) {
  width: 18px;
  height: 18px;
}

.avatar {
  align-items: flex-end;
  gap: 10px;
  fill: #5a5e66;
}

.avatar-box {
  width: 40px;
  height: 40px;
  padding: 1px;
  border: 1px solid #c0c0c0;
}

.avatar-box svg {
  width: 16px;
  height: 16px;
}

.avatar .caret {
  margin-bottom: 7px;
}

.tags {
  position: relative;
  z-index: 2;
  height: 34px;
  padding: 3px 15px;
  border-top: 1px solid #f0f0f0;
  border-bottom: 1px solid #d8dce5;
  background-color: #fff;
  box-shadow: 0 1px 3px rgba(0, 0, 0, 0.12);
}

.tag {
  display: inline-flex;
  align-items: center;
  gap: 5px;
  height: 26px;
  padding: 0 9px;
  background-color: #42b983;
  color: #fff;
  font-size: 12px;
}

.tag::before {
  content: "";
  width: 8px;
  height: 8px;
  border-radius: 50%;
  background-color: #fff;
}

.dashboard {
  position: relative;
  flex: 1;
  min-height: 0;
  padding: 50px 16px 8px 32px;
  overflow: hidden;
  background-color: #f0f1f5;
}

.corner {
  position: absolute;
  right: -16px;
  top: 0;
  z-index: 1;
}

.corner svg {
  width: 80px;
  height: 80px;
}

.panels {
  display: grid;
  grid-template-columns: repeat(4, 1fr);
  gap: 40px;
  margin-bottom: 32px;
}

.panel {
  display: flex;
  justify-content: space-between;
  height: 108px;
  padding: 26px 26px 26px 30px;
  background-color: #fff;
  box-shadow: 4px 4px 40px rgba(0, 0, 0, 0.05);
  font-family: "Liberation Sans", sans-serif;
  font-weight: 700;
}

.panel svg {
  width: 48px;
  height: 48px;
  margin-top: 4px;
}

.label {
  margin-bottom: 12px;
  color: rgba(0, 0, 0, 0.45);
  font-size: 16px;
  line-height: 18px;
}

.number {
  color: #666;
  font-size: 20px;
  line-height: 22px;
}

.chart-card {
  padding-top: 16px;
  background-color: #fff;
}

.legend {
  display: flex;
  justify-content: center;
  gap: 10px;
  height: 20px;
  color: #333;
  font-size: 12px;
}

.legend span {
  display: flex;
  align-items: center;
  gap: 5px;
}

.legend svg {
  width: 25px;
  height: 14px;
}

.chart {
  width: 100%;
  height: 330px;
  fill: #008acd;
  font-size: 12px;
}
```

FILE: chart.js
```js
const svg = document.getElementById('chart');
const days = ['Mon', 'Tue', 'Wed', 'Thu', 'Fri', 'Sat', 'Sun'];
const expected = [100, 120, 161, 134, 105, 160, 165];
const actual = [120, 82, 91, 154, 162, 140, 145];

const top0 = 10;
const bottom = 290;
const left = 55;

function toPoints(data, right) {
  return data.map((v, i) => [
    left + (right - left) * i / (data.length - 1),
    bottom - v * (bottom - top0) / 180
  ]);
}

// smooth line through the points, control points kept inside the data's range
function curve(points) {
  const ys = points.map(p => p[1]);
  const min = Math.min(...ys);
  const max = Math.max(...ys);
  const clamp = p => [p[0], Math.max(min, Math.min(max, p[1]))];
  let out = points[0];
  let d = 'M' + points[0];
  for (let i = 1; i < points.length; i++) {
    const p = points[i];
    const prev = points[i - 1];
    const next = points[i + 1];
    let into = p;
    let nextOut = p;
    if (next) {
      const vx = next[0] - prev[0];
      const vy = next[1] - prev[1];
      const a = Math.hypot(p[0] - prev[0], p[1] - prev[1]);
      const b = Math.hypot(next[0] - p[0], next[1] - p[1]);
      const ratio = b / (a + b);
      into = clamp([p[0] - vx * 0.5 * (1 - ratio), p[1] - vy * 0.5 * (1 - ratio)]);
      nextOut = clamp([p[0] + vx * 0.5 * ratio, p[1] + vy * 0.5 * ratio]);
    }
    d += ' C' + out + ' ' + into + ' ' + p;
    out = nextOut;
  }
  return d;
}

function draw() {
  const right = svg.clientWidth - 26;
  const width = right - left;
  let html = '';

  for (let v = 180; v >= 0; v -= 30) {
    const y = Math.round(bottom - v * (bottom - top0) / 180);
    if (v % 60 === 0 && v > 0) {
      html += `<rect x="${left}" y="${y}" width="${width}" height="47" fill="#f9f9f9"/>`;
    }
    html += `<path d="M${left} ${y + 0.5} H${right}" stroke="#eee"/>`;
    html += `<text x="${left - 8}" y="${y + 3}" text-anchor="end">${v}</text>`;
  }
  html += `<path d="M${left + 0.5} ${top0 - 1} V${bottom}" stroke="#008acd"/>`;

  const red = toPoints(expected, right);
  const blue = toPoints(actual, right);
  html += `<path d="${curve(blue)} V${bottom} H${left} Z" fill="#f3f8ff" fill-opacity="0.7"/>`;
  html += `<path d="M${left} ${bottom + 0.5} H${right}" stroke="#008acd"/>`;

  [[red, '#ff005a'], [blue, '#3888fa']].forEach(([points, color]) => {
    html += `<path d="${curve(points)}" fill="none" stroke="${color}" stroke-width="2"/>`;
    points.forEach(p => {
      html += `<circle cx="${p[0]}" cy="${p[1]}" r="1.6" fill="#fff" stroke="${color}" stroke-width="0.8"/>`;
    });
  });

  days.forEach((day, i) => {
    html += `<text x="${blue[i][0]}" y="${bottom + 17}" text-anchor="middle">${day}</text>`;
  });
  svg.innerHTML = html;
}

draw();
window.addEventListener('resize', draw);
```
